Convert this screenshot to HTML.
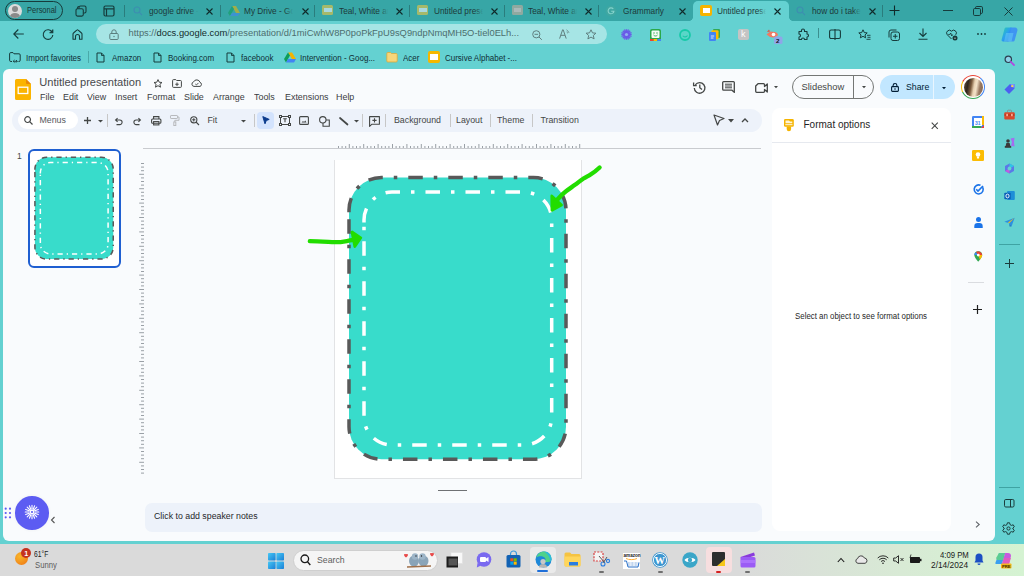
<!DOCTYPE html>
<html><head><meta charset="utf-8">
<style>
*{margin:0;padding:0;box-sizing:border-box}
html,body{width:1024px;height:576px;overflow:hidden;font-family:"Liberation Sans",sans-serif;background:#64d1d1;position:relative}
.a{position:absolute}
.t{position:absolute;white-space:nowrap;line-height:1}
svg{position:absolute;overflow:visible}
#tabs{left:0;top:0;width:1024px;height:21px;background:#37a6a6}
#tb{left:0;top:21px;width:1024px;height:48px;background:#64d1d1}
#content{left:3px;top:69px;width:992px;height:472px;background:#f9fbfd;border-radius:6px}
#taskbar{left:0;top:544px;width:1024px;height:32px;background:linear-gradient(90deg,#dadada 0%,#dadada 72%,#d8ead5 88%,#d5f3d2 100%)}
.tab{position:absolute;top:0;height:21px}
.sep{position:absolute;width:1px;background:#2a7d7d}
.tabtxt{font-size:9.2px;color:#1d3a3a;top:6.8px;width:55px;overflow:hidden;transform:scaleX(0.9);transform-origin:0 0}
.bm{font-size:8.5px;color:#0f2e36;top:53.8px;transform:scaleX(0.94);transform-origin:0 0}
.menu{font-size:9.4px;color:#3a3c3f;top:92.4px;transform:scaleX(0.95);transform-origin:0 0}
.tbtxt{font-size:8.8px;color:#444746;top:115.5px}
</style></head><body>
<div id="tabs" class="a"></div>
<div id="tb" class="a"></div>

<!-- ===== TAB STRIP ===== -->
<div class="a" style="left:5px;top:1px;width:58px;height:19px;border:1.3px solid #163c3c;border-radius:10px"></div>
<div class="a" style="left:7.5px;top:3.5px;width:14.5px;height:14.5px;border-radius:50%;background:#dcdcdc;overflow:hidden">
  <div class="a" style="left:4.3px;top:2.5px;width:6px;height:6px;border-radius:50%;background:#8a8a8a"></div>
  <div class="a" style="left:2px;top:9.5px;width:10.5px;height:8px;border-radius:50%;background:#8a8a8a"></div>
</div>
<div class="t" style="left:27px;top:6.2px;font-size:8.8px;color:#173636;transform:scaleX(0.85);transform-origin:0 0">Personal</div>
<!-- workspaces icon -->
<svg style="left:75px;top:5px" width="12" height="12" viewBox="0 0 12 12"><g fill="none" stroke="#163c3c" stroke-width="1.1"><path d="M4 3.5V2.5A1.5 1.5 0 0 1 5.5 1H9.5A1.5 1.5 0 0 1 11 2.5V6.5A1.5 1.5 0 0 1 9.5 8H8.5"/><rect x="1" y="3.8" width="7.3" height="7.3" rx="1.5"/><path d="M2.5 3.8V3A1.5 1.5 0 0 1 4 1.5"/></g></svg>
<svg style="left:103px;top:5px" width="12" height="12" viewBox="0 0 12 12"><g fill="none" stroke="#163c3c" stroke-width="1.2"><rect x="1" y="1" width="10" height="10" rx="1.5"/><path d="M1 3.8H11M3.5 3.8V11"/></g></svg>
<div class="sep" style="left:124px;top:5px;height:12px"></div>
<!-- tab 1 -->
<svg style="left:133px;top:6px" width="10" height="10" viewBox="0 0 10 10"><g fill="none" stroke="#3d8fb0" stroke-width="1.1"><circle cx="4" cy="4" r="3"/><path d="M6.2 6.2L9 9"/></g></svg>
<div class="t tabtxt" style="left:149px">google drive -</div>
<svg style="left:206.0px;top:7.5px" width="7" height="7" viewBox="0 0 7 7"><path d="M0.5 0.5L6.5 6.5M6.5 0.5L0.5 6.5" stroke="#102a2a" stroke-width="1.1"/></svg>
<div class="sep" style="left:220px;top:5px;height:12px"></div>
<!-- tab 2 -->
<svg style="left:228px;top:6px;opacity:0.55" width="12" height="10" viewBox="0 0 12 10"><path d="M4 0H8L12 7H8Z" fill="#f4b400"/><path d="M4 0L0 7L2 10L6 3Z" fill="#0f9d58"/><path d="M2 10H10L12 7H4Z" fill="#4285f4"/></svg>
<div class="t tabtxt" style="left:244px">My Drive - Go</div>
<svg style="left:302.0px;top:7.5px" width="7" height="7" viewBox="0 0 7 7"><path d="M0.5 0.5L6.5 6.5M6.5 0.5L0.5 6.5" stroke="#102a2a" stroke-width="1.1"/></svg>
<div class="sep" style="left:314px;top:5px;height:12px"></div>
<!-- tab 3 -->
<div class="a" style="left:322px;top:5px;width:11px;height:10px;background:#a6b96a;border-radius:1.5px"><div class="a" style="left:1.5px;top:3px;width:8px;height:4px;background:#a9d8e0"></div></div>
<div class="t tabtxt" style="left:339px">Teal, White an</div>
<svg style="left:396.0px;top:7.5px" width="7" height="7" viewBox="0 0 7 7"><path d="M0.5 0.5L6.5 6.5M6.5 0.5L0.5 6.5" stroke="#102a2a" stroke-width="1.1"/></svg>
<div class="sep" style="left:409px;top:5px;height:12px"></div>
<!-- tab 4 -->
<div class="a" style="left:417px;top:5px;width:11px;height:10px;background:#a6b96a;border-radius:1.5px"><div class="a" style="left:1.5px;top:3px;width:8px;height:4px;background:#a9d8e0"></div></div>
<div class="t tabtxt" style="left:434px">Untitled prese</div>
<svg style="left:491.0px;top:7.5px" width="7" height="7" viewBox="0 0 7 7"><path d="M0.5 0.5L6.5 6.5M6.5 0.5L0.5 6.5" stroke="#102a2a" stroke-width="1.1"/></svg>
<div class="sep" style="left:504px;top:5px;height:12px"></div>
<!-- tab 5 -->
<div class="a" style="left:512px;top:5px;width:11px;height:10px;background:#8fa9a0;border-radius:1.5px"><div class="a" style="left:2px;top:3px;width:7px;height:4px;background:#a9b9b9"></div></div>
<div class="t tabtxt" style="left:528px">Teal, White an</div>
<svg style="left:585.0px;top:7.5px" width="7" height="7" viewBox="0 0 7 7"><path d="M0.5 0.5L6.5 6.5M6.5 0.5L0.5 6.5" stroke="#102a2a" stroke-width="1.1"/></svg>
<div class="sep" style="left:598px;top:5px;height:12px"></div>
<!-- tab 6 grammarly -->
<svg style="left:604.5px;top:4.5px" width="12" height="12" viewBox="0 0 12 12"><circle cx="6" cy="6" r="5.6" fill="#3fa7a2"/><path d="M8.3 4A2.9 2.9 0 1 0 8.9 6.3H6.2" fill="none" stroke="#86d2cc" stroke-width="1.1"/></svg>
<div class="t tabtxt" style="left:623px">Grammarly</div>
<svg style="left:679.0px;top:7.5px" width="7" height="7" viewBox="0 0 7 7"><path d="M0.5 0.5L6.5 6.5M6.5 0.5L0.5 6.5" stroke="#102a2a" stroke-width="1.1"/></svg>
<!-- active tab -->
<div class="a" style="left:693px;top:1px;width:96px;height:21px;background:#64d1d1;border-radius:5px 5px 0 0"></div>
<div class="a" style="left:689px;top:17px;width:4px;height:4px;background:radial-gradient(circle at 0 0,#37a6a6 3.6px,#64d1d1 4.2px)"></div><div class="a" style="left:789px;top:17px;width:4px;height:4px;background:radial-gradient(circle at 100% 0,#37a6a6 3.6px,#64d1d1 4.2px)"></div>
<div class="a" style="left:700px;top:5px;width:12px;height:11px;background:#f6b400;border-radius:2px"><div class="a" style="left:2.5px;top:3.2px;width:7px;height:4.6px;background:#fff"></div></div>
<div class="t tabtxt" style="left:717px">Untitled prese</div>
<svg style="left:774.0px;top:7.5px" width="7" height="7" viewBox="0 0 7 7"><path d="M0.5 0.5L6.5 6.5M6.5 0.5L0.5 6.5" stroke="#102a2a" stroke-width="1.1"/></svg>
<!-- tab 8 -->
<svg style="left:796px;top:6px" width="10" height="10" viewBox="0 0 10 10"><g fill="none" stroke="#3d8fb0" stroke-width="1.1"><circle cx="4" cy="4" r="3"/><path d="M6.2 6.2L9 9"/></g></svg>
<div class="t tabtxt" style="left:812px">how do i take</div>
<svg style="left:869px;top:7.5px" width="7" height="7" viewBox="0 0 7 7"><path d="M0.5 0.5L6.5 6.5M6.5 0.5L0.5 6.5" stroke="#102a2a" stroke-width="1.1"/></svg>
<div class="sep" style="left:882px;top:5px;height:12px"></div>
<svg style="left:889px;top:5px" width="11" height="11" viewBox="0 0 11 11"><path d="M5.5 0.5V10.5M0.5 5.5H10.5" stroke="#102a2a" stroke-width="1.1"/></svg>
<div class="a" style="left:190px;top:4px;width:9px;height:13px;background:linear-gradient(90deg,rgba(55,166,166,0),#37a6a6 90%)"></div>
<div class="a" style="left:285px;top:4px;width:9px;height:13px;background:linear-gradient(90deg,rgba(55,166,166,0),#37a6a6 90%)"></div>
<div class="a" style="left:380px;top:4px;width:9px;height:13px;background:linear-gradient(90deg,rgba(55,166,166,0),#37a6a6 90%)"></div>
<div class="a" style="left:475px;top:4px;width:9px;height:13px;background:linear-gradient(90deg,rgba(55,166,166,0),#37a6a6 90%)"></div>
<div class="a" style="left:569px;top:4px;width:9px;height:13px;background:linear-gradient(90deg,rgba(55,166,166,0),#37a6a6 90%)"></div>
<div class="a" style="left:853px;top:4px;width:9px;height:13px;background:linear-gradient(90deg,rgba(55,166,166,0),#37a6a6 90%)"></div>
<div class="a" style="left:758px;top:4px;width:9px;height:13px;background:linear-gradient(90deg,rgba(100,209,209,0),#64d1d1 90%)"></div>
<!-- window controls -->
<div class="a" style="left:943px;top:10px;width:10px;height:1px;background:#163c3c"></div>
<svg style="left:973px;top:6px" width="10" height="10" viewBox="0 0 10 10"><g fill="none" stroke="#163c3c" stroke-width="1"><rect x="0.5" y="2.5" width="7" height="7" rx="1.2"/><path d="M2.5 2.5V1.8A1.3 1.3 0 0 1 3.8 0.5H8.2A1.3 1.3 0 0 1 9.5 1.8V6.2A1.3 1.3 0 0 1 8.2 7.5H7.5"/></g></svg>
<svg style="left:1003.5px;top:6.5px" width="9" height="9" viewBox="0 0 9 9"><path d="M0.5 0.5L8.5 8.5M8.5 0.5L0.5 8.5" stroke="#163c3c" stroke-width="1"/></svg>

<!-- ===== TOOLBAR ===== -->
<svg style="left:13px;top:28.5px" width="11" height="10" viewBox="0 0 11 10"><path d="M10.8 5H0.8M5.3 0.5L0.8 5L5.3 9.5" fill="none" stroke="#163c3c" stroke-width="1.1"/></svg>
<svg style="left:42px;top:28.5px" width="12" height="11" viewBox="0 0 12 11"><path d="M10.2 3.2A4.8 4.8 0 1 0 10.8 6" fill="none" stroke="#163c3c" stroke-width="1.1"/><path d="M10.8 0.5V3.8H7.5" fill="#163c3c" stroke="#163c3c" stroke-width="1.1" stroke-linejoin="round"/></svg>
<svg style="left:71.5px;top:28.5px" width="11" height="11" viewBox="0 0 11 11"><path d="M1 10.3V5A1.3 1.3 0 0 1 1.5 4L4.8 1.1A1 1 0 0 1 6.2 1.1L9.5 4A1.3 1.3 0 0 1 10 5V10.3H7.5V7.5A2 2 0 0 0 3.5 7.5V10.3Z" fill="none" stroke="#163c3c" stroke-width="1.1" stroke-linejoin="round"/></svg>
<div class="a" style="left:96px;top:23.5px;width:511px;height:20px;background:#a6e5e5;border-radius:10px"></div>
<svg style="left:108.5px;top:28.5px" width="10" height="11" viewBox="0 0 10 11"><rect x="0.8" y="4.5" width="8.4" height="6" rx="1" fill="none" stroke="#5b7f7f" stroke-width="1"/><path d="M2.8 4.5V3A2.2 2.2 0 0 1 7.2 3V4.5" fill="none" stroke="#5b7f7f" stroke-width="1"/><circle cx="5" cy="7.5" r="0.7" fill="#5b7f7f"/></svg>
<div class="t" style="left:128.5px;top:29.3px;font-size:9.36px;color:#4c6e6e">https://<span style="color:#122c2c">docs.google.com</span>/presentation/d/1miCwhW8P0poPkFpU9sQ9ndpNmqMH5O-tiel0ELh...</div>
<svg style="left:532px;top:29.5px" width="11" height="10" viewBox="0 0 11 10"><g fill="none" stroke="#5f7f7f" stroke-width="1"><circle cx="4.3" cy="4.3" r="3.6"/><path d="M7 7L9.8 9.8M2.5 4.3H6.1"/></g></svg>
<svg style="left:559px;top:28.5px" width="11" height="10" viewBox="0 0 11 10"><path d="M0.6 9.6L3.6 0.8H4.2L7.2 9.6M1.8 6.3H6" fill="none" stroke="#5f7f7f" stroke-width="1"/><path d="M7.5 0.8C8.5 1.5 9.5 2.5 10 3.8M7.6 3L9 4.3" fill="none" stroke="#5f7f7f" stroke-width="0.8"/></svg>
<svg style="left:585px;top:28.5px" width="12" height="11" viewBox="0 0 12 11"><path d="M6 0.8L7.5 3.9L10.9 4.2L8.3 6.5L9.1 9.9L6 8.1L2.9 9.9L3.7 6.5L1.1 4.2L4.5 3.9Z" fill="none" stroke="#5f7f7f" stroke-width="1" stroke-linejoin="round"/></svg>
<!-- extensions -->
<svg style="left:621px;top:28.5px" width="11" height="11" viewBox="0 0 11 11"><g stroke="#6a5ae8" stroke-width="1.3"><path d="M5.5 0.3V10.7M0.3 5.5H10.7M1.8 1.8L9.2 9.2M9.2 1.8L1.8 9.2M3.5 0.5L7.5 10.5M7.5 0.5L3.5 10.5M0.5 3.5L10.5 7.5M0.5 7.5L10.5 3.5"/></g><circle cx="5.5" cy="5.5" r="3.2" fill="#6a5ae8"/><circle cx="5.5" cy="5.5" r="1.6" fill="#8fb0f0"/></svg>
<svg style="left:650px;top:28.5px" width="11" height="12" viewBox="0 0 11 12"><rect x="0" y="0" width="11" height="12" rx="2" fill="#2aa84a"/><rect x="1.5" y="1.5" width="8" height="7.5" rx="1" fill="#f4fbf5"/><circle cx="4" cy="4" r="0.7" fill="#2aa84a"/><circle cx="7" cy="4" r="0.7" fill="#2aa84a"/><path d="M3.5 6C4.5 7.3 6.5 7.3 7.5 6" fill="none" stroke="#2aa84a" stroke-width="0.9"/><rect x="0" y="10" width="3.7" height="2" fill="#e94235"/><rect x="3.7" y="10" width="3.6" height="2" fill="#fbbc04"/><rect x="7.3" y="10" width="3.7" height="2" fill="#4285f4"/></svg>
<svg style="left:679px;top:28.5px" width="12" height="12" viewBox="0 0 12 12"><circle cx="6" cy="6" r="5" fill="#5ad6c8" stroke="#18c9a8" stroke-width="1.8"/><path d="M3.8 6.8C4.8 8.3 7.5 8.3 8.5 6.5" fill="none" stroke="#18c9a8" stroke-width="1.1"/></svg>
<svg style="left:709px;top:28.5px" width="11" height="12" viewBox="0 0 11 12"><rect x="4" y="0" width="7" height="9" rx="1" fill="#34a853"/><rect x="2.5" y="1.3" width="7" height="9" rx="1" fill="#fbbc04"/><rect x="0" y="3" width="7" height="9" rx="1" fill="#4285f4"/><path d="M1.8 7H5.2M1.8 9H4.5" stroke="#fff" stroke-width="0.8"/></svg>
<div class="a" style="left:738px;top:28.5px;width:11px;height:11px;background:#c4c4c4;border-radius:2px"></div>
<div class="t" style="left:741px;top:29.5px;font-size:9px;color:#fff">k</div>
<svg style="left:766px;top:28.5px" width="17" height="15" viewBox="0 0 17 15"><path d="M0.5 5.5L4 2.5L9 3C11 3.5 12 5 12 6C11 7.5 9 8.5 7 8.5L4 8Z" fill="#f07a64"/><circle cx="7.5" cy="5.5" r="1.8" fill="#fff"/><path d="M1 3L3 0.5L4 2.5Z" fill="#e05040"/><rect x="8" y="7.5" width="8.5" height="7.5" rx="1.5" fill="#8fa6e8"/><text x="10" y="13.6" font-size="6.2" fill="#111" font-family="Liberation Sans" font-weight="bold">2</text></svg>
<svg style="left:796.5px;top:28.5px" width="12" height="12" viewBox="0 0 12 12"><path d="M4.5 1.5A1.5 1.5 0 0 1 7.5 1.5V2.5H10V5A1.5 1.5 0 0 1 10 8V10.5H7.5A1.5 1.5 0 0 0 4.5 10.5H2V8A1.5 1.5 0 0 0 2 5V2.5H4.5Z" fill="none" stroke="#163c3c" stroke-width="1.1" stroke-linejoin="round"/></svg>
<div class="a" style="left:818px;top:28px;width:1px;height:10px;background:#3c8f8f"></div>
<svg style="left:828.5px;top:29px" width="12" height="11" viewBox="0 0 12 11"><rect x="0.6" y="1" width="10.8" height="8.5" rx="1.5" fill="none" stroke="#163c3c" stroke-width="1.1"/><path d="M6 0V11" stroke="#163c3c" stroke-width="1.1"/></svg>
<svg style="left:858px;top:28.5px" width="13" height="12" viewBox="0 0 13 12"><path d="M5 0.8L6.3 3.6L9.2 3.9L7 5.9L7.6 8.8L5 7.3L2.4 8.8L3 5.9L0.8 3.9L3.7 3.6Z" fill="none" stroke="#163c3c" stroke-width="1" stroke-linejoin="round"/><path d="M9 6.3H12.5M9.5 8.3H12.5M8.5 10.3H12.5" stroke="#163c3c" stroke-width="0.9"/></svg>
<svg style="left:887.5px;top:28.5px" width="12" height="12" viewBox="0 0 12 12"><g fill="none" stroke="#163c3c" stroke-width="1"><rect x="3" y="3" width="8.5" height="8.5" rx="2"/><path d="M1 8.5V3A2 2 0 0 1 3 1H8.5M7.25 5V9.5M5 7.25H9.5"/></g></svg>
<svg style="left:918px;top:28px" width="10" height="12" viewBox="0 0 10 12"><path d="M5 0.5V8.3M1.5 5L5 8.5L8.5 5M0.5 11.3H9.5" fill="none" stroke="#163c3c" stroke-width="1.1"/></svg>
<svg style="left:946px;top:28.5px" width="12" height="12" viewBox="0 0 12 12"><path d="M5.5 10L1.3 5.8A2.7 2.7 0 0 1 5.5 2.2A2.7 2.7 0 0 1 9.7 5.8" fill="none" stroke="#163c3c" stroke-width="1"/><path d="M2.3 5.5H3.8L4.7 4L5.8 7L6.6 5.5" fill="none" stroke="#163c3c" stroke-width="0.9"/><circle cx="9" cy="9" r="2.5" fill="#163c3c"/><path d="M8 9.2H10" stroke="#ccc" stroke-width="0.7"/></svg>
<svg style="left:977px;top:33px" width="9" height="2" viewBox="0 0 9 2"><g fill="#163c3c"><circle cx="1" cy="1" r="0.9"/><circle cx="4.5" cy="1" r="0.9"/><circle cx="8" cy="1" r="0.9"/></g></svg>
<svg style="left:1001px;top:27px" width="17" height="15" viewBox="0 0 17 15"><defs><linearGradient id="cp1" x1="0" y1="0" x2="1" y2="1"><stop offset="0" stop-color="#2bd0a8"/><stop offset="0.5" stop-color="#2a9ff0"/><stop offset="1" stop-color="#1d5fe0"/></linearGradient></defs><path d="M5 0.5H10.5L7.5 14.5H2A1.5 1.5 0 0 1 0.6 12.6L3.6 1.6A1.5 1.5 0 0 1 5 0.5Z" fill="url(#cp1)"/><path d="M9.5 0.5H14A2.5 2.5 0 0 1 16.4 3.6L13.6 13.4A1.5 1.5 0 0 1 12.2 14.5H6.5Z" fill="#3a8ef5" opacity="0.9"/><path d="M5 6H12.5L10.5 14.5H3Z" fill="#62c8f5" opacity="0.6"/></svg>

<!-- ===== BOOKMARKS ===== -->
<svg style="left:9px;top:52px" width="12" height="11" viewBox="0 0 12 11"><path d="M3 9.5H1.8A1.2 1.2 0 0 1 0.6 8.3V1.8A1.2 1.2 0 0 1 1.8 0.6H4L5 1.8H10A1.2 1.2 0 0 1 11.2 3V8.3A1.2 1.2 0 0 1 10 9.5H9.5" fill="none" stroke="#163c3c" stroke-width="1"/><path d="M4.3 9.3H8.2M5.5 8L4.2 9.3L5.5 10.6M7 8L8.3 9.3L7 10.6" fill="none" stroke="#163c3c" stroke-width="0.9"/></svg>
<div class="t bm" style="left:25.6px">Import favorites</div>
<div class="a" style="left:88px;top:51px;width:1px;height:12px;background:#4aa9a9"></div>
<svg style="left:96px;top:52px" width="9" height="11" viewBox="0 0 9 11"><path d="M1 1H5.5L8 3.5V10H1Z" fill="none" stroke="#163c3c" stroke-width="1" stroke-linejoin="round"/><path d="M5.5 1V3.5H8" fill="none" stroke="#163c3c" stroke-width="0.9"/></svg>
<div class="t bm" style="left:111.5px">Amazon</div>
<svg style="left:152.5px;top:52px" width="9" height="11" viewBox="0 0 9 11"><path d="M1 1H5.5L8 3.5V10H1Z" fill="none" stroke="#163c3c" stroke-width="1" stroke-linejoin="round"/><path d="M5.5 1V3.5H8" fill="none" stroke="#163c3c" stroke-width="0.9"/></svg>
<div class="t bm" style="left:168px">Booking.com</div>
<svg style="left:226px;top:52px" width="9" height="11" viewBox="0 0 9 11"><path d="M1 1H5.5L8 3.5V10H1Z" fill="none" stroke="#163c3c" stroke-width="1" stroke-linejoin="round"/><path d="M5.5 1V3.5H8" fill="none" stroke="#163c3c" stroke-width="0.9"/></svg>
<div class="t bm" style="left:240.6px">facebook</div>
<svg style="left:284px;top:52px" width="12" height="11" viewBox="0 0 12 11"><path d="M4 0.5H8L12 7H8Z" fill="#f4b400"/><path d="M4 0.5L0 7L2 10.5L6 3.5Z" fill="#0f9d58"/><path d="M2 10.5H10L12 7H4Z" fill="#4285f4"/></svg>
<div class="t bm" style="left:300px">Intervention - Goog...</div>
<svg style="left:386px;top:51px" width="12" height="12" viewBox="0 0 12 12"><path d="M0.8 2.5A1 1 0 0 1 1.8 1.5H4.5L5.5 2.5H10.2A1 1 0 0 1 11.2 3.5V10A1 1 0 0 1 10.2 11H1.8A1 1 0 0 1 0.8 10Z" fill="#f6d67a" stroke="#d9a93a" stroke-width="0.8"/></svg>
<div class="t bm" style="left:403px">Acer</div>
<div class="a" style="left:428px;top:51px;width:12px;height:12px;background:#f5b800;border-radius:2px"><div class="a" style="left:2px;top:3px;width:8px;height:6px;background:#fff"></div></div>
<div class="t bm" style="left:445px">Cursive Alphabet -...</div>

<!-- ===== CONTENT ===== -->
<div id="content" class="a"></div>
<!-- slides logo -->
<svg style="left:15px;top:79px" width="16" height="21" viewBox="0 0 16 21"><path d="M1.5 0H11L16 5V19.5A1.5 1.5 0 0 1 14.5 21H1.5A1.5 1.5 0 0 1 0 19.5V1.5A1.5 1.5 0 0 1 1.5 0Z" fill="#fbb400"/><path d="M11 0L16 5H12A1 1 0 0 1 11 4Z" fill="#e8870b"/><rect x="3.2" y="8.2" width="9.6" height="6.3" fill="none" stroke="#fff" stroke-width="1.3"/></svg>
<div class="t" style="left:39.3px;top:76.6px;font-size:11.1px;color:#47494c">Untitled presentation</div>
<svg style="left:153px;top:78.5px" width="10" height="9" viewBox="0 0 10 9"><path d="M5 0.6L6.2 3.2L9 3.5L6.9 5.3L7.5 8.2L5 6.7L2.5 8.2L3.1 5.3L1 3.5L3.8 3.2Z" fill="none" stroke="#444746" stroke-width="1" stroke-linejoin="round"/></svg>
<svg style="left:172px;top:78.5px" width="10" height="9" viewBox="0 0 10 9"><path d="M0.6 1.5A0.9 0.9 0 0 1 1.5 0.6H3.8L4.7 1.5H8.5A0.9 0.9 0 0 1 9.4 2.4V7.5A0.9 0.9 0 0 1 8.5 8.4H1.5A0.9 0.9 0 0 1 0.6 7.5Z" fill="none" stroke="#444746" stroke-width="1"/><path d="M5 3.5V7M3.3 5.25H6.7" stroke="#444746" stroke-width="1"/></svg>
<svg style="left:190.5px;top:78.5px" width="12" height="8" viewBox="0 0 12 8"><path d="M3 7.4A2.3 2.3 0 0 1 2.6 2.9A3.4 3.4 0 0 1 9 3.4A2.1 2.1 0 0 1 9 7.4Z" fill="none" stroke="#444746" stroke-width="1"/><path d="M4.3 5L5.4 6L7.5 3.9" fill="none" stroke="#444746" stroke-width="0.9"/></svg>
<div class="t menu" style="left:39.7px">File</div>
<div class="t menu" style="left:62.5px">Edit</div>
<div class="t menu" style="left:87px">View</div>
<div class="t menu" style="left:115px">Insert</div>
<div class="t menu" style="left:147px">Format</div>
<div class="t menu" style="left:184px">Slide</div>
<div class="t menu" style="left:213px">Arrange</div>
<div class="t menu" style="left:254px">Tools</div>
<div class="t menu" style="left:284.5px">Extensions</div>
<div class="t menu" style="left:336px">Help</div>
<!-- right header -->
<svg style="left:692.5px;top:80.5px" width="13" height="13" viewBox="0 0 13 13"><path d="M2.3 3.8A5.3 5.3 0 1 1 1.3 7" fill="none" stroke="#444746" stroke-width="1.3"/><path d="M0.6 1.5V4.6H3.7" fill="none" stroke="#444746" stroke-width="1.3"/><path d="M6.8 3.5V6.8L9 8.5" fill="none" stroke="#444746" stroke-width="1.3"/></svg>
<svg style="left:722px;top:81px" width="13" height="12" viewBox="0 0 13 12"><path d="M1.6 0.6H11.4A0.9 0.9 0 0 1 12.3 1.5V11.4L10 9.2H1.6A0.9 0.9 0 0 1 0.7 8.3V1.5A0.9 0.9 0 0 1 1.6 0.6Z" fill="none" stroke="#444746" stroke-width="1.3" stroke-linejoin="round"/><path d="M3 3.2H10M3 5H10M3 6.8H10" stroke="#444746" stroke-width="1"/></svg>
<svg style="left:755px;top:82.5px" width="13" height="10" viewBox="0 0 13 10"><path d="M3 0.7H8.5A1 1 0 0 1 9.5 1.7V3.5L12.3 1V9L9.5 6.5V8.3A1 1 0 0 1 8.5 9.3H1.7A1 1 0 0 1 0.7 8.3V3Z" fill="none" stroke="#444746" stroke-width="1.3" stroke-linejoin="round"/></svg>
<svg style="left:774px;top:86px" width="4" height="3" viewBox="0 0 4 3"><path d="M0 0H4L2 2.2Z" fill="#444746"/></svg>
<div class="a" style="left:792px;top:75px;width:82px;height:24px;border:1px solid #747775;border-radius:12px"></div>
<div class="a" style="left:853px;top:75px;width:1px;height:24px;background:#747775"></div>
<div class="t" style="left:801.5px;top:82px;font-size:9.4px;color:#444746">Slideshow</div>
<svg style="left:861.5px;top:86px" width="4" height="3" viewBox="0 0 4 3"><path d="M0 0H4L2 2.2Z" fill="#444746"/></svg>
<div class="a" style="left:880px;top:75px;width:75px;height:24px;background:#c2e7ff;border-radius:12px"></div>
<div class="a" style="left:933px;top:75px;width:1px;height:24px;background:#f9fbfd;opacity:0.7"></div>
<svg style="left:891px;top:82.5px" width="8" height="9" viewBox="0 0 8 9"><rect x="0.6" y="3.6" width="6.8" height="4.8" rx="0.8" fill="none" stroke="#001d35" stroke-width="1.1"/><path d="M2.1 3.6V2.4A1.9 1.9 0 0 1 5.9 2.4V3.6" fill="none" stroke="#001d35" stroke-width="1.1"/><circle cx="4" cy="6" r="0.8" fill="#001d35"/></svg>
<div class="t" style="left:905.5px;top:82px;font-size:9.4px;color:#001d35;transform:scaleX(0.93);transform-origin:0 0">Share</div>
<svg style="left:942px;top:86.5px" width="4" height="3" viewBox="0 0 4 3"><path d="M0 0H4L2 2.2Z" fill="#001d35"/></svg>
<!-- avatar -->
<div class="a" style="left:961px;top:75px;width:24.4px;height:24.4px;border-radius:50%;background:conic-gradient(#ea4335 0deg 40deg,#4285f4 40deg 140deg,#34a853 140deg 245deg,#fbbc04 245deg 300deg,#ea4335 300deg 360deg)"></div>
<div class="a" style="left:962.3px;top:76.3px;width:21.8px;height:21.8px;border-radius:50%;background:#fff"></div>
<div class="a" style="left:963.6px;top:77.6px;width:19.2px;height:19.2px;border-radius:50%;background:linear-gradient(100deg,#6b5440 0%,#2e241c 22%,#7a5a3c 38%,#e9d3b4 52%,#f3e2c8 62%,#9b7b62 78%,#7a6050 100%)"></div>
<!-- toolbar pill -->
<div class="a" style="left:12px;top:108.5px;width:750px;height:23px;background:#edf2fa;border-radius:12px"></div>
<div class="a" style="left:17.5px;top:111px;width:60px;height:18px;background:#fff;border-radius:9px"></div>
<svg style="left:24px;top:116px" width="9" height="9" viewBox="0 0 9 9"><g fill="none" stroke="#444746" stroke-width="1.2"><circle cx="3.6" cy="3.6" r="2.9"/><path d="M5.7 5.7L8.5 8.5"/></g></svg>
<div class="t tbtxt" style="left:39.5px;top:116.3px;color:#55585c">Menus</div>
<svg style="left:83.5px;top:116.5px" width="7" height="7" viewBox="0 0 7 7"><path d="M3.5 0V7M0 3.5H7" stroke="#444746" stroke-width="1.3"/></svg>
<svg style="left:97.8px;top:120px" width="5" height="3" viewBox="0 0 5 3"><path d="M0 0H5L2.5 2.6Z" fill="#444746"/></svg>
<div class="a" style="left:106.5px;top:114px;width:1px;height:13px;background:#c7c7c7"></div>
<svg style="left:114px;top:116.5px" width="9" height="9" viewBox="0 0 9 9"><path d="M2 3H5.8A2.3 2.3 0 0 1 5.8 7.6H2.5M3.6 1.2L1.6 3L3.6 4.8" fill="none" stroke="#444746" stroke-width="1.1"/></svg>
<svg style="left:132.5px;top:116.5px" width="9" height="9" viewBox="0 0 9 9"><path d="M7 3H3.2A2.3 2.3 0 0 0 3.2 7.6H6.5M5.4 1.2L7.4 3L5.4 4.8" fill="none" stroke="#444746" stroke-width="1.1"/></svg>
<svg style="left:151px;top:116px" width="10.5" height="9.5" viewBox="0 0 10.5 9.5"><g fill="none" stroke="#444746" stroke-width="1.1"><path d="M2.6 3V0.6H7.9V3"/><rect x="0.6" y="3" width="9.3" height="4.2" rx="1"/><rect x="2.6" y="5.6" width="5.3" height="3.3"/></g></svg>
<svg style="left:169.5px;top:115px" width="9.5" height="11" viewBox="0 0 9.5 11"><g fill="none" stroke="#b8babd" stroke-width="1"><rect x="0.5" y="0.5" width="7" height="3" rx="0.6"/><path d="M7.5 2H9V5.3H4.8V7"/><rect x="3.8" y="7" width="2" height="3.5"/></g></svg>
<svg style="left:189.5px;top:115.5px" width="9.5" height="9.5" viewBox="0 0 9.5 9.5"><g fill="none" stroke="#444746" stroke-width="1.1"><circle cx="3.8" cy="3.8" r="3.1"/><path d="M6 6L9 9M2.2 3.8H5.4M3.8 2.2V5.4"/></g></svg>
<div class="t tbtxt" style="left:207.5px;top:116.3px">Fit</div>
<svg style="left:240.5px;top:120px" width="5" height="3" viewBox="0 0 5 3"><path d="M0 0H5L2.5 2.6Z" fill="#444746"/></svg>
<div class="a" style="left:253.5px;top:114px;width:1px;height:13px;background:#c7c7c7"></div>
<div class="a" style="left:257px;top:111.5px;width:17px;height:17.5px;background:#d3e3fd;border-radius:4px"></div>
<svg style="left:261.5px;top:116px" width="8" height="9" viewBox="0 0 8 9"><path d="M0.8 0.6L7.2 3.4L4.3 4.5L3 7.8Z" fill="#0b3b8c" stroke="#0b3b8c" stroke-width="1" stroke-linejoin="round"/></svg>
<svg style="left:278.5px;top:115px" width="12" height="11" viewBox="0 0 12 11"><g fill="none" stroke="#444746" stroke-width="1"><path d="M2.2 1.5H9.8M2.2 9.5H9.8M1.5 2.2V8.8M10.5 2.2V8.8"/><rect x="0.5" y="0.5" width="2" height="2"/><rect x="9.5" y="0.5" width="2" height="2"/><rect x="0.5" y="8.5" width="2" height="2"/><rect x="9.5" y="8.5" width="2" height="2"/></g><path d="M4.2 3.8H7.8M6 3.8V7.3" stroke="#444746" stroke-width="1.1"/></svg>
<svg style="left:298.5px;top:116px" width="10" height="9" viewBox="0 0 10 9"><rect x="0.6" y="0.6" width="8.8" height="7.8" rx="1" fill="none" stroke="#444746" stroke-width="1.1"/><path d="M2.5 6.5L4 5L5 6L6.3 4.5L7.5 6.5Z" fill="#444746"/></svg>
<svg style="left:318.5px;top:115.5px" width="11" height="11" viewBox="0 0 11 11"><g fill="none" stroke="#444746" stroke-width="1.1"><circle cx="3.8" cy="3.8" r="3.2"/><path d="M4 7V10.3H10.3V4H7"/></g></svg>
<svg style="left:339px;top:116.5px" width="9.5" height="8.5" viewBox="0 0 9.5 8.5"><path d="M1 1L8.5 7.5" stroke="#444746" stroke-width="1.7" stroke-linecap="round"/></svg>
<svg style="left:353.5px;top:120px" width="5" height="3" viewBox="0 0 5 3"><path d="M0 0H5L2.5 2.6Z" fill="#444746"/></svg>
<div class="a" style="left:362px;top:114px;width:1px;height:13px;background:#c7c7c7"></div>
<svg style="left:369px;top:115.5px" width="11" height="11" viewBox="0 0 11 11"><path d="M0.6 0.6H10.4V8.2H3L0.6 10.4Z" fill="none" stroke="#444746" stroke-width="1.1" stroke-linejoin="round"/><path d="M5.5 2.3V6.5M3.4 4.4H7.6" stroke="#444746" stroke-width="1.1"/></svg>
<div class="a" style="left:385px;top:114px;width:1px;height:13px;background:#c7c7c7"></div>
<div class="t tbtxt" style="left:394px">Background</div>
<div class="a" style="left:449.5px;top:114px;width:1px;height:13px;background:#c7c7c7"></div>
<div class="t tbtxt" style="left:456px">Layout</div>
<div class="a" style="left:489.5px;top:114px;width:1px;height:13px;background:#c7c7c7"></div>
<div class="t tbtxt" style="left:497px">Theme</div>
<div class="a" style="left:532px;top:114px;width:1px;height:13px;background:#c7c7c7"></div>
<div class="t tbtxt" style="left:540.5px">Transition</div>
<svg style="left:713px;top:114px" width="12" height="12" viewBox="0 0 12 12"><path d="M1 1L11 4.5L6.5 6.5L4.5 11Z" fill="none" stroke="#444746" stroke-width="1.2" stroke-linejoin="round"/></svg>
<svg style="left:728px;top:119px" width="6" height="4" viewBox="0 0 6 4"><path d="M0 0H6L3 3.5Z" fill="#444746"/></svg>
<svg style="left:741px;top:117px" width="8" height="6" viewBox="0 0 8 6"><path d="M1 5L4 2L7 5" fill="none" stroke="#444746" stroke-width="1.3"/></svg>

<!-- ===== FILMSTRIP ===== -->
<div class="t" style="left:17px;top:151.5px;font-size:8.5px;color:#444746">1</div>
<div class="a" style="left:27.5px;top:149px;width:93.5px;height:119px;border:2px solid #1f5fd1;border-radius:6px;background:#fff"></div>
<svg style="left:0;top:0" width="1024" height="576" viewBox="0 0 1024 576"><g transform="translate(29.5 151) scale(0.361) translate(-334 -160)">
  <path d="M349 212.25V210.00A32.5 32.5 0 0 1 381.50 177.5H533.50A32.5 32.5 0 0 1 566.00 210.00V426.80A32.5 32.5 0 0 1 533.50 459.30H381.50A32.5 32.5 0 0 1 349 426.80V212.25" fill="#38dccb" stroke="#595959" stroke-width="4.2" stroke-dasharray="14.5 11 3.5 11"/>
  <path d="M364 222.60V220.00A28 28 0 0 1 392.00 192H523.70A28 28 0 0 1 551.70 220.00V417.00A28 28 0 0 1 523.70 445.00H392.00A28 28 0 0 1 364 417.00V222.60" fill="none" stroke="#fff" stroke-width="4.2" stroke-dasharray="14.5 11 3.5 11"/></g></svg>

<!-- ===== RULERS ===== -->
<div class="a" style="left:143px;top:148px;width:618px;height:1px;background:#c9cbcf"></div>
<svg style="left:0;top:0" width="1024" height="576" viewBox="0 0 1024 576" id="rulers"><rect x="338.0" y="146" width="1" height="2" fill="#9aa0a6"/><rect x="341.6" y="146" width="1" height="2" fill="#9aa0a6"/><rect x="345.2" y="146" width="1" height="2" fill="#9aa0a6"/><rect x="348.8" y="144" width="1" height="4" fill="#9aa0a6"/><rect x="352.4" y="146" width="1" height="2" fill="#9aa0a6"/><rect x="356.0" y="146" width="1" height="2" fill="#9aa0a6"/><rect x="359.6" y="146" width="1" height="2" fill="#9aa0a6"/><rect x="363.2" y="144" width="1" height="4" fill="#9aa0a6"/><rect x="366.8" y="146" width="1" height="2" fill="#9aa0a6"/><rect x="370.4" y="146" width="1" height="2" fill="#9aa0a6"/><rect x="374.0" y="146" width="1" height="2" fill="#9aa0a6"/><rect x="377.6" y="144" width="1" height="4" fill="#9aa0a6"/><rect x="381.2" y="146" width="1" height="2" fill="#9aa0a6"/><rect x="384.8" y="146" width="1" height="2" fill="#9aa0a6"/><rect x="388.4" y="146" width="1" height="2" fill="#9aa0a6"/><rect x="392.0" y="144" width="1" height="4" fill="#9aa0a6"/><rect x="395.6" y="146" width="1" height="2" fill="#9aa0a6"/><rect x="399.2" y="146" width="1" height="2" fill="#9aa0a6"/><rect x="402.8" y="146" width="1" height="2" fill="#9aa0a6"/><rect x="406.4" y="144" width="1" height="4" fill="#9aa0a6"/><rect x="410.0" y="146" width="1" height="2" fill="#9aa0a6"/><rect x="413.6" y="146" width="1" height="2" fill="#9aa0a6"/><rect x="417.2" y="146" width="1" height="2" fill="#9aa0a6"/><rect x="420.8" y="144" width="1" height="4" fill="#9aa0a6"/><rect x="424.4" y="146" width="1" height="2" fill="#9aa0a6"/><rect x="428.0" y="146" width="1" height="2" fill="#9aa0a6"/><rect x="431.6" y="146" width="1" height="2" fill="#9aa0a6"/><rect x="435.2" y="144" width="1" height="4" fill="#9aa0a6"/><rect x="438.8" y="146" width="1" height="2" fill="#9aa0a6"/><rect x="442.4" y="146" width="1" height="2" fill="#9aa0a6"/><rect x="446.0" y="146" width="1" height="2" fill="#9aa0a6"/><rect x="449.6" y="144" width="1" height="4" fill="#9aa0a6"/><rect x="453.2" y="146" width="1" height="2" fill="#9aa0a6"/><rect x="456.8" y="146" width="1" height="2" fill="#9aa0a6"/><rect x="460.4" y="146" width="1" height="2" fill="#9aa0a6"/><rect x="464.0" y="144" width="1" height="4" fill="#9aa0a6"/><rect x="467.6" y="146" width="1" height="2" fill="#9aa0a6"/><rect x="471.2" y="146" width="1" height="2" fill="#9aa0a6"/><rect x="474.8" y="146" width="1" height="2" fill="#9aa0a6"/><rect x="478.4" y="144" width="1" height="4" fill="#9aa0a6"/><rect x="482.0" y="146" width="1" height="2" fill="#9aa0a6"/><rect x="485.6" y="146" width="1" height="2" fill="#9aa0a6"/><rect x="489.2" y="146" width="1" height="2" fill="#9aa0a6"/><rect x="492.8" y="144" width="1" height="4" fill="#9aa0a6"/><rect x="496.4" y="146" width="1" height="2" fill="#9aa0a6"/><rect x="500.0" y="146" width="1" height="2" fill="#9aa0a6"/><rect x="503.6" y="146" width="1" height="2" fill="#9aa0a6"/><rect x="507.2" y="144" width="1" height="4" fill="#9aa0a6"/><rect x="510.8" y="146" width="1" height="2" fill="#9aa0a6"/><rect x="514.4" y="146" width="1" height="2" fill="#9aa0a6"/><rect x="518.0" y="146" width="1" height="2" fill="#9aa0a6"/><rect x="521.6" y="144" width="1" height="4" fill="#9aa0a6"/><rect x="525.2" y="146" width="1" height="2" fill="#9aa0a6"/><rect x="528.8" y="146" width="1" height="2" fill="#9aa0a6"/><rect x="532.4" y="146" width="1" height="2" fill="#9aa0a6"/><rect x="536.0" y="144" width="1" height="4" fill="#9aa0a6"/><rect x="539.6" y="146" width="1" height="2" fill="#9aa0a6"/><rect x="543.2" y="146" width="1" height="2" fill="#9aa0a6"/><rect x="546.8" y="146" width="1" height="2" fill="#9aa0a6"/><rect x="550.4" y="144" width="1" height="4" fill="#9aa0a6"/><rect x="554.0" y="146" width="1" height="2" fill="#9aa0a6"/><rect x="557.6" y="146" width="1" height="2" fill="#9aa0a6"/><rect x="561.2" y="146" width="1" height="2" fill="#9aa0a6"/><rect x="564.8" y="144" width="1" height="4" fill="#9aa0a6"/><rect x="568.4" y="146" width="1" height="2" fill="#9aa0a6"/><rect x="572.0" y="146" width="1" height="2" fill="#9aa0a6"/><rect x="575.6" y="146" width="1" height="2" fill="#9aa0a6"/><rect x="579.2" y="144" width="1" height="4" fill="#9aa0a6"/><rect x="141" y="163.0" width="3" height="1" fill="#9aa0a6"/><rect x="141" y="166.6" width="3" height="1" fill="#9aa0a6"/><rect x="141" y="170.2" width="3" height="1" fill="#9aa0a6"/><rect x="139.2" y="173.8" width="4.8" height="1" fill="#9aa0a6"/><rect x="141" y="177.4" width="3" height="1" fill="#9aa0a6"/><rect x="141" y="181.0" width="3" height="1" fill="#9aa0a6"/><rect x="141" y="184.6" width="3" height="1" fill="#9aa0a6"/><rect x="139.2" y="188.2" width="4.8" height="1" fill="#9aa0a6"/><rect x="141" y="191.8" width="3" height="1" fill="#9aa0a6"/><rect x="141" y="195.4" width="3" height="1" fill="#9aa0a6"/><rect x="141" y="199.0" width="3" height="1" fill="#9aa0a6"/><rect x="139.2" y="202.6" width="4.8" height="1" fill="#9aa0a6"/><rect x="141" y="206.2" width="3" height="1" fill="#9aa0a6"/><rect x="141" y="209.8" width="3" height="1" fill="#9aa0a6"/><rect x="141" y="213.4" width="3" height="1" fill="#9aa0a6"/><rect x="139.2" y="217.0" width="4.8" height="1" fill="#9aa0a6"/><rect x="141" y="220.6" width="3" height="1" fill="#9aa0a6"/><rect x="141" y="224.2" width="3" height="1" fill="#9aa0a6"/><rect x="141" y="227.8" width="3" height="1" fill="#9aa0a6"/><rect x="139.2" y="231.4" width="4.8" height="1" fill="#9aa0a6"/><rect x="141" y="235.0" width="3" height="1" fill="#9aa0a6"/><rect x="141" y="238.6" width="3" height="1" fill="#9aa0a6"/><rect x="141" y="242.2" width="3" height="1" fill="#9aa0a6"/><rect x="139.2" y="245.8" width="4.8" height="1" fill="#9aa0a6"/><rect x="141" y="249.4" width="3" height="1" fill="#9aa0a6"/><rect x="141" y="253.0" width="3" height="1" fill="#9aa0a6"/><rect x="141" y="256.6" width="3" height="1" fill="#9aa0a6"/><rect x="139.2" y="260.2" width="4.8" height="1" fill="#9aa0a6"/><rect x="141" y="263.8" width="3" height="1" fill="#9aa0a6"/><rect x="141" y="267.4" width="3" height="1" fill="#9aa0a6"/><rect x="141" y="271.0" width="3" height="1" fill="#9aa0a6"/><rect x="139.2" y="274.6" width="4.8" height="1" fill="#9aa0a6"/><rect x="141" y="278.2" width="3" height="1" fill="#9aa0a6"/><rect x="141" y="281.8" width="3" height="1" fill="#9aa0a6"/><rect x="141" y="285.4" width="3" height="1" fill="#9aa0a6"/><rect x="139.2" y="289.0" width="4.8" height="1" fill="#9aa0a6"/><rect x="141" y="292.6" width="3" height="1" fill="#9aa0a6"/><rect x="141" y="296.2" width="3" height="1" fill="#9aa0a6"/><rect x="141" y="299.8" width="3" height="1" fill="#9aa0a6"/><rect x="139.2" y="303.4" width="4.8" height="1" fill="#9aa0a6"/><rect x="141" y="307.0" width="3" height="1" fill="#9aa0a6"/><rect x="141" y="310.6" width="3" height="1" fill="#9aa0a6"/><rect x="141" y="314.2" width="3" height="1" fill="#9aa0a6"/><rect x="139.2" y="317.8" width="4.8" height="1" fill="#9aa0a6"/><rect x="141" y="321.4" width="3" height="1" fill="#9aa0a6"/><rect x="141" y="325.0" width="3" height="1" fill="#9aa0a6"/><rect x="141" y="328.6" width="3" height="1" fill="#9aa0a6"/><rect x="139.2" y="332.2" width="4.8" height="1" fill="#9aa0a6"/><rect x="141" y="335.8" width="3" height="1" fill="#9aa0a6"/><rect x="141" y="339.4" width="3" height="1" fill="#9aa0a6"/><rect x="141" y="343.0" width="3" height="1" fill="#9aa0a6"/><rect x="139.2" y="346.6" width="4.8" height="1" fill="#9aa0a6"/><rect x="141" y="350.2" width="3" height="1" fill="#9aa0a6"/><rect x="141" y="353.8" width="3" height="1" fill="#9aa0a6"/><rect x="141" y="357.4" width="3" height="1" fill="#9aa0a6"/><rect x="139.2" y="361.0" width="4.8" height="1" fill="#9aa0a6"/><rect x="141" y="364.6" width="3" height="1" fill="#9aa0a6"/><rect x="141" y="368.2" width="3" height="1" fill="#9aa0a6"/><rect x="141" y="371.8" width="3" height="1" fill="#9aa0a6"/><rect x="139.2" y="375.4" width="4.8" height="1" fill="#9aa0a6"/><rect x="141" y="379.0" width="3" height="1" fill="#9aa0a6"/><rect x="141" y="382.6" width="3" height="1" fill="#9aa0a6"/><rect x="141" y="386.2" width="3" height="1" fill="#9aa0a6"/><rect x="139.2" y="389.8" width="4.8" height="1" fill="#9aa0a6"/><rect x="141" y="393.4" width="3" height="1" fill="#9aa0a6"/><rect x="141" y="397.0" width="3" height="1" fill="#9aa0a6"/><rect x="141" y="400.6" width="3" height="1" fill="#9aa0a6"/><rect x="139.2" y="404.2" width="4.8" height="1" fill="#9aa0a6"/><rect x="141" y="407.8" width="3" height="1" fill="#9aa0a6"/><rect x="141" y="411.4" width="3" height="1" fill="#9aa0a6"/><rect x="141" y="415.0" width="3" height="1" fill="#9aa0a6"/><rect x="139.2" y="418.6" width="4.8" height="1" fill="#9aa0a6"/><rect x="141" y="422.2" width="3" height="1" fill="#9aa0a6"/><rect x="141" y="425.8" width="3" height="1" fill="#9aa0a6"/><rect x="141" y="429.4" width="3" height="1" fill="#9aa0a6"/><rect x="139.2" y="433.0" width="4.8" height="1" fill="#9aa0a6"/><rect x="141" y="436.6" width="3" height="1" fill="#9aa0a6"/><rect x="141" y="440.2" width="3" height="1" fill="#9aa0a6"/><rect x="141" y="443.8" width="3" height="1" fill="#9aa0a6"/><rect x="139.2" y="447.4" width="4.8" height="1" fill="#9aa0a6"/><rect x="141" y="451.0" width="3" height="1" fill="#9aa0a6"/><rect x="141" y="454.6" width="3" height="1" fill="#9aa0a6"/><rect x="141" y="458.2" width="3" height="1" fill="#9aa0a6"/><rect x="139.2" y="461.8" width="4.8" height="1" fill="#9aa0a6"/><rect x="141" y="465.4" width="3" height="1" fill="#9aa0a6"/><rect x="141" y="469.0" width="3" height="1" fill="#9aa0a6"/><rect x="141" y="472.6" width="3" height="1" fill="#9aa0a6"/></svg>

<!-- ===== SLIDE ===== -->
<div class="a" style="left:334px;top:160px;width:248px;height:319px;background:#fff;border:1px solid #e2e3e5;border-top:none"></div>
<svg style="left:0;top:0" width="1024" height="576" viewBox="0 0 1024 576">
  <path d="M349 212.25V210.00A32.5 32.5 0 0 1 381.50 177.5H533.50A32.5 32.5 0 0 1 566.00 210.00V426.80A32.5 32.5 0 0 1 533.50 459.30H381.50A32.5 32.5 0 0 1 349 426.80V212.25" fill="#38dccb" stroke="#595959" stroke-width="3.5" stroke-dasharray="14.5 11 3.5 11"/>
  <path d="M364 222.60V220.00A28 28 0 0 1 392.00 192H523.70A28 28 0 0 1 551.70 220.00V417.00A28 28 0 0 1 523.70 445.00H392.00A28 28 0 0 1 364 417.00V222.60" fill="none" stroke="#fff" stroke-width="3.5" stroke-dasharray="14.5 11 3.5 11"/>
  <!-- arrows -->
  <g fill="none" stroke="#22dd00" stroke-width="4.3" stroke-linecap="round" stroke-linejoin="round">
    <path d="M309.8 241.2C318 241.3 326 241.8 334.7 242.2C341 242.4 346 241 352 240.2"/>
    <path d="M599.6 167.5C596 171 594 172.5 590 174.8C587 176.5 585 177.5 583 178.8C580 180.5 578 182.8 575 184.8C572 187 569 189 566 191.3C563 193.5 560.5 196 557 200"/>
  </g>
  <path d="M352 232L360.8 237.8L354.8 246.5Z" fill="#22dd00" stroke="#22dd00" stroke-width="2.8" stroke-linejoin="round"/>
  <path d="M551.8 196L561.5 205L552 210.3Z" fill="#22dd00" stroke="#22dd00" stroke-width="2.8" stroke-linejoin="round"/>
</svg>
<div class="a" style="left:438px;top:489.6px;width:29px;height:1.4px;background:#6f7174"></div>

<!-- ===== NOTES ===== -->
<div class="a" style="left:144.5px;top:503px;width:617.5px;height:29px;background:#edf2fa;border-radius:7px"></div>
<div class="t" style="left:154px;top:511.6px;font-size:8.9px;color:#26282b;transform:scaleX(0.99);transform-origin:0 0">Click to add speaker notes</div>

<!-- ===== FORMAT PANEL ===== -->
<div class="a" style="left:771.5px;top:108px;width:179.5px;height:423px;background:#fff;border-radius:8px"></div>
<div class="a" style="left:771.5px;top:141.5px;width:179.5px;height:1px;background:#e6e9ef"></div>
<svg style="left:783.8px;top:119.3px" width="10" height="12" viewBox="0 0 10 12"><rect x="0" y="0" width="9.8" height="7.8" rx="1.3" fill="#f5b400"/><path d="M1.5 1.5H5L6 2.5H8.3V4.2H1.5Z" fill="#fff" opacity="0.85"/><rect x="1.3" y="5.2" width="7.2" height="1" fill="#fff" opacity="0.9"/><path d="M2.7 7.5H7.1V10A2.2 2.2 0 0 1 2.7 10Z" fill="#f5b400"/></svg>
<div class="t" style="left:803.5px;top:119.6px;font-size:10px;color:#1f1f1f">Format options</div>
<svg style="left:931px;top:121.5px" width="7.5" height="7.5" viewBox="0 0 7.5 7.5"><path d="M0.7 0.7L6.8 6.8M6.8 0.7L0.7 6.8" stroke="#444746" stroke-width="1.05"/></svg>
<div class="t" style="left:795.4px;top:311.8px;font-size:8.5px;color:#1f1f1f;transform:scaleX(0.928);transform-origin:0 0">Select an object to see format options</div>
<svg style="left:975px;top:521px" width="6" height="7" viewBox="0 0 6 7"><path d="M1 0.6L4.2 3.5L1 6.4" fill="none" stroke="#5f6368" stroke-width="1.1"/></svg>

<!-- ===== SIDE APPS ===== -->
<svg style="left:972px;top:116px" width="12" height="12" viewBox="0 0 12 12"><rect x="0" y="0" width="12" height="12" rx="1.3" fill="#4285f4"/><rect x="2" y="2" width="8" height="8" fill="#fff"/><rect x="0" y="10" width="9" height="2" fill="#34a853"/><rect x="10" y="0" width="2" height="9" fill="#fbbc04"/><path d="M9 12H12V9Z" fill="#ea4335"/><text x="3" y="8.6" font-size="5" font-family="Liberation Sans" fill="#4285f4" font-weight="bold">31</text></svg>
<svg style="left:972px;top:150px" width="12" height="11" viewBox="0 0 12 11"><rect x="0" y="0" width="12" height="11" rx="1.3" fill="#fbbc04"/><circle cx="6" cy="4.5" r="2.3" fill="#fff"/><rect x="4.9" y="6.5" width="2.2" height="2" fill="#fff"/></svg>
<svg style="left:972.5px;top:183.5px" width="11" height="11" viewBox="0 0 11 11"><path d="M9.6 3.2A4.5 4.5 0 1 1 7.5 1.3" fill="none" stroke="#1a73e8" stroke-width="1.6"/><path d="M3.2 5.3L5 7.1L10 2" fill="none" stroke="#1a73e8" stroke-width="1.6"/></svg>
<svg style="left:973.5px;top:217px" width="9" height="11" viewBox="0 0 9 11"><circle cx="4.5" cy="2.6" r="2.5" fill="#1a73e8"/><path d="M0.3 11V9.3A3.3 3.3 0 0 1 3.6 6H5.4A3.3 3.3 0 0 1 8.7 9.3V11Z" fill="#1a73e8"/></svg>
<svg style="left:973.5px;top:250.5px" width="8.5" height="11" viewBox="0 0 8.5 11"><path d="M4.25 10.8C4.25 10.8 0.3 6.5 0.3 4.1A3.95 3.95 0 0 1 8.2 4.1C8.2 6.5 4.25 10.8 4.25 10.8Z" fill="#34a853"/><path d="M0.3 4.1A3.95 3.95 0 0 1 2 0.9L4.25 4.1Z" fill="#4285f4"/><path d="M2 0.9A3.95 3.95 0 0 1 8.2 4.1H4.25Z" fill="#ea4335"/><path d="M8.2 4.1C8.2 5.7 7 7.5 6 8.7L4.25 4.1Z" fill="#fbbc04"/><circle cx="4.25" cy="4.1" r="1.4" fill="#fff"/></svg>
<div class="a" style="left:968px;top:282px;width:16px;height:1px;background:#dadce0"></div>
<svg style="left:973px;top:304.5px" width="9" height="9" viewBox="0 0 9 9"><path d="M4.5 0V9M0 4.5H9" stroke="#1f1f1f" stroke-width="1.2"/></svg>

<!-- ===== EDGE SIDEBAR ===== -->
<svg style="left:1003.5px;top:55px" width="11" height="11" viewBox="0 0 11 11"><circle cx="4.3" cy="4.3" r="3.2" fill="#8dd0e8" stroke="#2c3e50" stroke-width="1.2"/><path d="M6.8 6.8L10 10" stroke="#b04be0" stroke-width="1.8" stroke-linecap="round"/></svg>
<svg style="left:1003.5px;top:82.5px" width="11" height="11" viewBox="0 0 11 11"><path d="M0.5 6.5L6 1H10.5V5.5L5 11Z" fill="#4d5ff0"/><path d="M6 1H10.5V5.5Z" fill="#7a92ff"/><circle cx="8.2" cy="3.2" r="1.1" fill="#ffd54a"/></svg>
<svg style="left:1003.5px;top:109px" width="11" height="11" viewBox="0 0 11 11"><path d="M3.5 3.2V2A0.8 0.8 0 0 1 4.3 1.2H6.7A0.8 0.8 0 0 1 7.5 2V3.2" fill="none" stroke="#8a8a8a" stroke-width="0.9"/><rect x="0.3" y="3.2" width="10.4" height="7.3" rx="1" fill="#d9482b"/><rect x="0.3" y="5.5" width="10.4" height="1" fill="#a83018"/><rect x="2.3" y="4.8" width="1.6" height="2.4" fill="#ffb199"/><rect x="7.1" y="4.8" width="1.6" height="2.4" fill="#ffb199"/></svg>
<svg style="left:1003.5px;top:136.5px" width="11" height="11" viewBox="0 0 11 11"><circle cx="4" cy="4" r="1.8" fill="#3a3a3a"/><path d="M2.4 6H5.6L6.4 9H1.6Z" fill="#3a3a3a"/><rect x="0.8" y="9" width="6.4" height="1.8" fill="#3a3a3a"/><path d="M6.5 1.5L10.5 0.8L10 5L10.5 9.5L7 8.8L8 5Z" fill="#a46cf0"/></svg>
<svg style="left:1003.5px;top:163px" width="11" height="11" viewBox="0 0 11 11"><path d="M5.5 0.5L10 3V8L5.5 10.5L1 8V3Z" fill="#5b78e8"/><path d="M5.5 0.5L10 3L5.5 5.5Z" fill="#2ec5e8"/><path d="M1 8L5.5 5.5V10.5Z" fill="#c05ae0"/><circle cx="5.5" cy="5.5" r="1.9" fill="#64d1d1"/></svg>
<svg style="left:1003.5px;top:189.5px" width="11" height="11" viewBox="0 0 11 11"><rect x="3" y="1" width="7.8" height="9" rx="1" fill="#1e8fd8"/><rect x="0.3" y="2.8" width="6.4" height="6.4" rx="0.8" fill="#0a5fb8"/><ellipse cx="3.5" cy="6" rx="1.6" ry="1.9" fill="none" stroke="#fff" stroke-width="0.9"/></svg>
<svg style="left:1003.5px;top:216.5px" width="11" height="10" viewBox="0 0 11 10"><path d="M0.3 4.8L10.7 0.8L7.5 9.5L5.2 6.3Z" fill="#2d8fe0"/><path d="M5.2 6.3L10.7 0.8L4 5.6Z" fill="#f2c21a"/><path d="M5.2 6.3L5.6 9.5L7.5 9.5Z" fill="#1a6fc0"/></svg>
<div class="a" style="left:999px;top:243.5px;width:21px;height:1px;background:#3fa3a3"></div>
<svg style="left:1004.5px;top:259px" width="9" height="9" viewBox="0 0 9 9"><path d="M4.5 0V9M0 4.5H9" stroke="#1b3c3c" stroke-width="1"/></svg>
<div class="a" style="left:999px;top:487px;width:21px;height:1px;background:#3fa3a3"></div>
<svg style="left:1004px;top:498.5px" width="10.5" height="8.5" viewBox="0 0 10.5 8.5"><rect x="0.5" y="0.5" width="9.5" height="7.5" rx="1.3" fill="none" stroke="#1b3c3c" stroke-width="1"/><path d="M6.5 0.5V8" stroke="#1b3c3c" stroke-width="1"/></svg>
<svg style="left:1002px;top:522px" width="13" height="13" viewBox="0 0 13 13"><path d="M5.4 0.8H7.6L8 2.6L9.5 3.4L11.2 2.8L12.3 4.7L10.9 6V7L12.3 8.3L11.2 10.2L9.5 9.6L8 10.4L7.6 12.2H5.4L5 10.4L3.5 9.6L1.8 10.2L0.7 8.3L2.1 7V6L0.7 4.7L1.8 2.8L3.5 3.4L5 2.6Z" fill="none" stroke="#1b3c3c" stroke-width="1" stroke-linejoin="round"/><circle cx="6.5" cy="6.5" r="1.6" fill="none" stroke="#1b3c3c" stroke-width="1"/></svg>

<!-- ===== BOTTOM LEFT GEMINI ===== -->
<div class="a" style="left:12px;top:493px;width:40px;height:40px;border-radius:50%;background:radial-gradient(circle,rgba(0,0,0,0.06) 40%,rgba(0,0,0,0) 70%)"></div>
<div class="a" style="left:15px;top:496px;width:33.6px;height:33.6px;border-radius:50%;background:#5c5cf2"></div>
<svg style="left:23.5px;top:504px" width="16" height="16" viewBox="0 0 16 16"><g stroke="#fff" stroke-width="1.1" stroke-linecap="round"><path d="M8 1.2V5M8 11V14.8M1.2 8H5M11 8H14.8M3.2 3.2L5.9 5.9M10.1 10.1L12.8 12.8M12.8 3.2L10.1 5.9M5.9 10.1L3.2 12.8M5.4 1.7L6.8 5.2M9.2 10.8L10.6 14.3M10.6 1.7L9.2 5.2M6.8 10.8L5.4 14.3M1.7 5.4L5.2 6.8M10.8 9.2L14.3 10.6M1.7 10.6L5.2 9.2M10.8 6.8L14.3 5.4"/></g><circle cx="8" cy="8" r="2.4" fill="#fff"/><circle cx="8" cy="8" r="1.1" fill="#5c5cf2"/></svg>
<svg style="left:4px;top:507px" width="8" height="12" viewBox="0 0 8 12"><g fill="#5c5cf2"><circle cx="1.7" cy="1.7" r="1.1"/><circle cx="6" cy="1.7" r="1.1"/><circle cx="1.7" cy="6" r="1.1"/><circle cx="6" cy="6" r="1.1"/><circle cx="1.7" cy="10.3" r="1.1"/><circle cx="6" cy="10.3" r="1.1"/></g></svg>
<svg style="left:50px;top:516px" width="6" height="8" viewBox="0 0 6 8"><path d="M4.5 1L1.5 4L4.5 7" fill="none" stroke="#555" stroke-width="1.1"/></svg>

<!-- ===== TASKBAR ===== -->
<div id="taskbar" class="a"></div>
<div class="a" style="left:14.8px;top:552.4px;width:13px;height:13px;border-radius:50%;background:radial-gradient(circle at 35% 35%,#f8b52a,#ee7214)"></div>
<div class="a" style="left:20.9px;top:548.2px;width:10.3px;height:10.3px;border-radius:50%;background:#c4321f"></div>
<div class="t" style="left:24.3px;top:549.6px;font-size:7.2px;color:#fff;font-weight:bold">1</div>
<div class="t" style="left:34.4px;top:550.4px;font-size:8.4px;color:#1a1a1a;transform:scaleX(0.8);transform-origin:0 0">61°F</div>
<div class="t" style="left:34.6px;top:561.5px;font-size:8.2px;color:#5a5a5a;transform:scaleX(0.94);transform-origin:0 0">Sunny</div>
<svg style="left:268px;top:552.5px" width="16" height="16" viewBox="0 0 16 16"><defs><linearGradient id="wg" x1="0" y1="0" x2="1" y2="1"><stop offset="0" stop-color="#46c8f5"/><stop offset="1" stop-color="#1a7fd6"/></linearGradient></defs><g fill="url(#wg)"><rect x="0" y="0" width="7.6" height="7.6" rx="0.8"/><rect x="8.4" y="0" width="7.6" height="7.6" rx="0.8"/><rect x="0" y="8.4" width="7.6" height="7.6" rx="0.8"/><rect x="8.4" y="8.4" width="7.6" height="7.6" rx="0.8"/></g></svg>
<div class="a" style="left:293px;top:550px;width:145px;height:20.5px;background:#f5f5f5;border-radius:10.5px;border:1px solid #cfcfcf"></div>
<svg style="left:299.5px;top:554px" width="11" height="12" viewBox="0 0 11 12"><circle cx="4.8" cy="4.8" r="3.8" fill="none" stroke="#1a1a1a" stroke-width="1.3"/><path d="M7.5 7.8L10.3 11" stroke="#1a1a1a" stroke-width="1.4"/></svg>
<div class="t" style="left:316.8px;top:555.2px;font-size:9.8px;color:#5d5d5d;transform:scaleX(0.89);transform-origin:0 0">Search</div>
<svg style="left:403px;top:551px" width="32" height="18" viewBox="0 0 32 18"><path d="M1 4C1 3 2 2.5 3 3.3C4 2.5 5 3 5 4C5 5 3 6.5 3 6.5C3 6.5 1 5 1 4Z" fill="#e84a4a"/><path d="M27 3C27 2 28 1.5 29 2.3C30 1.5 31 2 31 3C31 4 29 5.5 29 5.5C29 5.5 27 4 27 3Z" fill="#e84a4a"/><ellipse cx="11" cy="10" rx="5" ry="5.5" fill="#8aa4b8"/><circle cx="12" cy="5.5" r="3.2" fill="#9db5c8"/><ellipse cx="20.5" cy="10" rx="5" ry="5.5" fill="#8aa4b8"/><circle cx="19.5" cy="5.5" r="3.2" fill="#9db5c8"/><path d="M4 16L28 15" stroke="#a0704a" stroke-width="1.4"/><circle cx="13" cy="5" r="0.7" fill="#222"/><circle cx="18.5" cy="5" r="0.7" fill="#222"/></svg>
<svg style="left:446px;top:552px" width="17" height="16" viewBox="0 0 17 16"><rect x="5" y="0.5" width="11.5" height="11" fill="#f8f8f8" stroke="#e0e0e0" stroke-width="0.6"/><rect x="0.5" y="4.5" width="11.5" height="11" fill="#1c1c1c"/><rect x="2.5" y="6.5" width="9" height="7" fill="#555"/></svg>
<svg style="left:476px;top:552px" width="16" height="16" viewBox="0 0 16 16"><circle cx="8" cy="7.5" r="7.3" fill="#7a6af0"/><path d="M1.5 11L0.8 15.5L5 13.5Z" fill="#7a6af0"/><rect x="4" y="5" width="6" height="5" rx="1" fill="#fff"/><path d="M10 6.5L12.5 5V10L10 8.5Z" fill="#fff"/></svg>
<svg style="left:506px;top:552px" width="15" height="16" viewBox="0 0 15 16"><path d="M4.5 3V2A3 3 0 0 1 10.5 2V3" fill="none" stroke="#3a9be0" stroke-width="1.2"/><rect x="0.5" y="3" width="14" height="12.5" rx="1.5" fill="#1262b3"/><rect x="4.3" y="6.3" width="3" height="3" fill="#f25022"/><rect x="7.7" y="6.3" width="3" height="3" fill="#7fba00"/><rect x="4.3" y="9.7" width="3" height="3" fill="#00a4ef"/><rect x="7.7" y="9.7" width="3" height="3" fill="#ffb900"/></svg>
<div class="a" style="left:530px;top:547px;width:26px;height:26px;background:#eaeaea;border-radius:4px"></div>
<div class="a" style="left:537px;top:569.5px;width:11px;height:2.3px;background:#1f6fd8;border-radius:1.5px"></div>
<svg style="left:535px;top:551px" width="17" height="17" viewBox="0 0 17 17"><circle cx="8.5" cy="8.5" r="8" fill="#1e88d8"/><path d="M1.2 6.5C2.5 2.5 5.8 0.5 9 0.5C13.5 0.5 16.5 4 16.5 8C16.5 10 15 11 13 11H8.5C10.5 10 11 8.5 10 7C8.5 5 4 4.5 1.2 6.5Z" fill="#4fd18b"/><path d="M9 0.5C13.5 0.5 16.5 4 16.5 8C16.5 9 16 10 15 10.5C15.5 6 12 2.5 9 0.5Z" fill="#2cb8e0"/><circle cx="8" cy="10.5" r="2.6" fill="#c8c8c8"/><path d="M4 16.5C4 13.8 5.8 13 8 13C10.2 13 12 13.8 12 16.5Z" fill="#b5b5b5"/></svg>
<svg style="left:564px;top:552px" width="17" height="15" viewBox="0 0 17 15"><path d="M0.5 2A1.5 1.5 0 0 1 2 0.5H6L7.5 2H15A1.5 1.5 0 0 1 16.5 3.5V13A1.5 1.5 0 0 1 15 14.5H2A1.5 1.5 0 0 1 0.5 13Z" fill="#f5c342"/><path d="M0.5 4.5H16.5V13A1.5 1.5 0 0 1 15 14.5H2A1.5 1.5 0 0 1 0.5 13Z" fill="#ffd65c"/><rect x="5" y="10" width="9" height="3.5" fill="#2a7de1"/></svg>
<svg style="left:593px;top:551px" width="17" height="16" viewBox="0 0 17 16"><rect x="1" y="1" width="9" height="9" fill="#f4f4f4" stroke="#d84040" stroke-width="1.2" stroke-dasharray="2 1.3"/><circle cx="10" cy="13" r="2" fill="none" stroke="#2a7de1" stroke-width="1.1"/><circle cx="15" cy="10" r="1.6" fill="none" stroke="#2a7de1" stroke-width="1.1"/><path d="M6 5L11.5 11.5M14 6L10.5 11.5" stroke="#555" stroke-width="1"/></svg>
<div class="a" style="left:598.5px;top:571px;width:5px;height:2px;background:#707070;border-radius:1px"></div>
<div class="a" style="left:623px;top:552.5px;width:16.5px;height:16.5px;background:#fff"></div>
<div class="t" style="left:623.5px;top:553.5px;font-size:4.6px;color:#222;font-weight:bold">amazon</div>
<svg style="left:623px;top:556px" width="17" height="13" viewBox="0 0 17 13"><path d="M3 2.5C6 4 11 4 14 2.5" fill="none" stroke="#f90" stroke-width="0.8"/><path d="M1 5H3.5L5 11H15L16 6.5" fill="none" stroke="#2a70c8" stroke-width="1"/><path d="M5 7H15.5M5 9H15" stroke="#2a70c8" stroke-width="0.7" stroke-dasharray="0.8 0.6"/></svg>
<svg style="left:652px;top:552px" width="16" height="16" viewBox="0 0 16 16"><circle cx="8" cy="8" r="7.8" fill="#3d96d0"/><circle cx="8" cy="8" r="6.6" fill="none" stroke="#fff" stroke-width="0.9"/><text x="2.6" y="11.8" font-size="10.5" font-family="Liberation Serif" font-weight="bold" fill="#fff">W</text></svg>
<div class="a" style="left:658px;top:571px;width:5px;height:2px;background:#707070;border-radius:1px"></div>
<svg style="left:682px;top:552px" width="16" height="16" viewBox="0 0 16 16"><circle cx="8" cy="8" r="7.7" fill="#3aa6c8"/><path d="M2.5 8C4.5 5 11.5 5 13.5 8C11.5 11 4.5 11 2.5 8Z" fill="#fff"/><circle cx="8" cy="8" r="2.2" fill="#3aa6c8"/></svg>
<div class="a" style="left:705.5px;top:547px;width:26px;height:26px;background:#f7dedf;border-radius:4px"></div>
<div class="a" style="left:712px;top:552px;width:13px;height:14px;background:#2e2e2e;border-radius:1px"></div>
<svg style="left:717px;top:559px" width="8" height="7" viewBox="0 0 8 7"><path d="M8 0V7H0Z" fill="#f7c71a"/></svg>
<div class="a" style="left:716px;top:570.5px;width:5px;height:2px;background:#d42020;border-radius:1px"></div>
<svg style="left:740px;top:551px" width="16" height="17" viewBox="0 0 16 17"><path d="M0.5 6L14 1.5L15 4.5L1.5 9Z" fill="#8a3bdc"/><rect x="0.5" y="6" width="15" height="10.5" rx="1.5" fill="#9b5cf5"/><rect x="0.5" y="9" width="15" height="3" fill="#b47cff" opacity="0.7"/></svg>
<div class="a" style="left:745px;top:571px;width:5px;height:2px;background:#707070;border-radius:1px"></div>
<!-- tray -->
<svg style="left:837px;top:557px" width="8" height="6" viewBox="0 0 8 6"><path d="M0.8 5L4 1.5L7.2 5" fill="none" stroke="#1a1a1a" stroke-width="1.1"/></svg>
<svg style="left:855px;top:555px" width="13" height="9" viewBox="0 0 13 9"><path d="M3 8.3A2.4 2.4 0 0 1 2.6 3.6A3.6 3.6 0 0 1 9.4 3A2.7 2.7 0 0 1 10 8.3Z" fill="#e8e8e8" stroke="#333" stroke-width="0.9"/></svg>
<svg style="left:877px;top:555px" width="12" height="9" viewBox="0 0 12 9"><g fill="none" stroke="#1a1a1a" stroke-width="0.9"><path d="M0.7 3A7.5 7.5 0 0 1 11.3 3"/><path d="M2.3 4.8A5.2 5.2 0 0 1 9.7 4.8"/><path d="M4 6.5A2.8 2.8 0 0 1 8 6.5"/></g><circle cx="6" cy="8.2" r="0.8" fill="#1a1a1a"/></svg>
<svg style="left:893px;top:555px" width="12" height="9" viewBox="0 0 12 9"><path d="M0.7 3H2.7L5.5 0.7V8.3L2.7 6H0.7Z" fill="none" stroke="#1a1a1a" stroke-width="0.9" stroke-linejoin="round"/><path d="M7.5 3L10.5 6M10.5 3L7.5 6" stroke="#1a1a1a" stroke-width="0.9"/></svg>
<svg style="left:909px;top:553.5px" width="13" height="10" viewBox="0 0 13 10"><rect x="1" y="3" width="10" height="6" rx="0.8" fill="#1a1a1a"/><rect x="11" y="4.8" width="1.5" height="2.4" fill="#1a1a1a"/><path d="M2 0.5L1 4H3L2.3 7" fill="none" stroke="#1a1a1a" stroke-width="0.8"/></svg>
<div class="t" style="left:939.5px;top:550.5px;font-size:8.6px;color:#1a1a1a;transform:scaleX(0.9);transform-origin:0 0">4:09 PM</div>
<div class="t" style="left:931.3px;top:560.5px;font-size:8.6px;color:#1a1a1a;transform:scaleX(0.97);transform-origin:0 0">2/14/2024</div>
<svg style="left:974px;top:553px" width="10" height="12" viewBox="0 0 10 12"><path d="M5 0.5A3.5 3.5 0 0 1 8.5 4V7.5L9.5 9.5H0.5L1.5 7.5V4A3.5 3.5 0 0 1 5 0.5Z" fill="#1b4fc4"/><path d="M3.5 10.5A1.5 1.5 0 0 0 6.5 10.5Z" fill="#1b4fc4"/></svg>
<svg style="left:994.5px;top:552px" width="17" height="17" viewBox="0 0 17 17"><path d="M4 1H10L7 12H1A1 1 0 0 1 0.3 11Z" fill="#3aa0f0"/><path d="M10 1H13A3 3 0 0 1 16 4L14 12H7Z" fill="#c95ae0"/><path d="M1 6L4 1H10L8 8H2Z" fill="#5ed08a" opacity="0.9"/><path d="M9 6H16L14 12H7Z" fill="#e65db8" opacity="0.8"/><rect x="6" y="11.5" width="10.5" height="5" rx="0.8" fill="#f6b81c"/><text x="7" y="15.8" font-size="4.2" font-family="Liberation Sans" font-weight="bold" fill="#3a2a00">PRE</text></svg>
</body></html>
